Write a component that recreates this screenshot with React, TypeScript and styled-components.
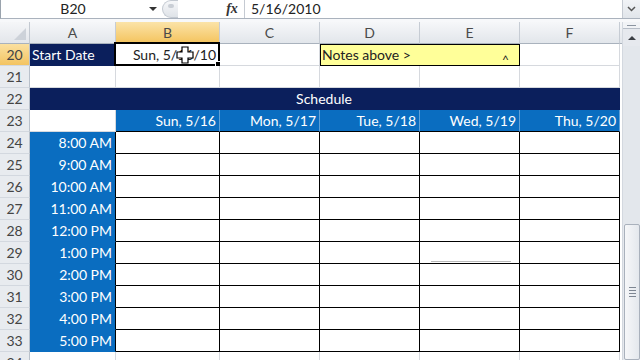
import styled, { createGlobalStyle, css } from "styled-components";

const GlobalStyle = createGlobalStyle`
  html, body {
    margin: 0;
    padding: 0;
    background: #ffffff;
  }
  body {
    font-family: Lato, "Liberation Sans", sans-serif;
  }
`;

const NAVY = "#0b1f5c";
const BLUE = "#0a6dc0";
const GRID = "#d6d9de";

const Window = styled.div`
  width: 640px;
  height: 360px;
  overflow: hidden;
  display: flex;
  flex-direction: column;
  background: #ffffff;
`;

const FormulaBar = styled.div`
  height: 19px;
  box-sizing: border-box;
  display: flex;
  align-items: center;
  border-bottom: 1px solid #aab2bd;
  border-left: 1px solid #9aa3ad;
  font-size: 14px;
  color: #222;
`;

const NameBox = styled.div`
  width: 144px;
  text-align: center;
  line-height: 18px;
`;

const DropArrow = styled.div`
  width: 16px;
  display: flex;
  justify-content: center;

  &::before {
    content: "";
    border-left: 4px solid transparent;
    border-right: 4px solid transparent;
    border-top: 4px solid #333;
  }
`;

const Splitter = styled.div`
  width: 16px;
  height: 18px;
  margin-left: 1px;
  border-radius: 9px 0 0 9px;
  background: linear-gradient(#f6f7f9, #dfe3e8);
  border: 1px solid #c3c9d1;
  border-right: none;
  box-sizing: border-box;
  position: relative;

  &::after {
    content: "";
    position: absolute;
    left: 5px;
    top: 3px;
    width: 6px;
    height: 4px;
    border-radius: 2px;
    background: #c9ced5;
  }
`;

const BarGap = styled.div`
  width: 42px;
  align-self: stretch;
  background: #ffffff;
`;

const FxButton = styled.div`
  width: 24px;
  font-family: "Liberation Serif", serif;
  font-style: italic;
  font-weight: bold;
  font-size: 14px;
  color: #333;
  text-align: center;
  line-height: 18px;
`;

const BarDivider = styled.div`
  width: 1px;
  height: 18px;
  background: #c5cad2;
`;

const FormulaText = styled.div`
  flex: 1;
  padding-left: 6px;
  line-height: 18px;
`;

const ExpandButton = styled.div`
  width: 18px;
  height: 18px;
  box-sizing: border-box;
  border-left: 1px solid #c5cad2;
  background: linear-gradient(#f1f3f6, #e1e5ea);
  display: flex;
  align-items: center;
  justify-content: center;
`;

const BarStrip = styled.div`
  height: 3px;
  background: #f7f8fa;
`;

const SheetArea = styled.div`
  flex: 1;
  display: flex;
  min-height: 0;
`;

const Grid = styled.div`
  width: 623px;
  display: flex;
  flex-direction: column;
`;

const Row = styled.div`
  display: flex;
  height: 22px;
  flex-shrink: 0;
`;

const Corner = styled.div`
  width: 30px;
  box-sizing: border-box;
  background: linear-gradient(#f5f6f8, #e3e6eb);
  border-right: 1px solid #c3c9d1;
  border-bottom: 1px solid #a9b2bd;
  position: relative;

  &::after {
    content: "";
    position: absolute;
    right: 3px;
    bottom: 3px;
    width: 12px;
    height: 12px;
    background: #cdd2d9;
    clip-path: polygon(100% 0, 100% 100%, 0 100%);
  }
`;

const ColHeader = styled.div<{ $w: number; $active?: boolean }>`
  width: ${(p) => p.$w}px;
  box-sizing: border-box;
  text-align: center;
  font-size: 14px;
  line-height: 21px;
  color: #4a4a4a;
  border-right: 1px solid #c6ccd4;
  border-bottom: 1px solid #a9b2bd;
  background: ${(p) =>
    p.$active
      ? "linear-gradient(#fbe3a8, #f4c45e)"
      : "linear-gradient(#f6f7f9, #e2e6eb)"};
`;

const HeaderTail = styled.div`
  flex: 1;
  border-bottom: 1px solid #a9b2bd;
  background: linear-gradient(#f6f7f9, #e2e6eb);
`;

const RowNumber = styled.div<{ $active?: boolean }>`
  width: 30px;
  box-sizing: border-box;
  text-align: center;
  font-size: 14px;
  line-height: 21px;
  color: #444;
  border-right: 1px solid #b9c1cb;
  border-bottom: 1px solid #d3d8df;
  background: ${(p) =>
    p.$active ? "linear-gradient(#fbe0a0, #f3c462)" : "#e8ebef"};
`;

type Variant = "plain" | "navy" | "head" | "time" | "box" | "yellow";

const variants = {
  plain: css`
    background: #fff;
    border-right: 1px solid ${GRID};
    border-bottom: 1px solid ${GRID};
  `,
  navy: css`
    background: ${NAVY};
    color: #fff;
    border-right: 1px solid ${NAVY};
    border-bottom: 1px solid ${NAVY};
  `,
  head: css`
    background: ${BLUE};
    color: #fff;
    border-right: 1px solid #5f9fd6;
    border-bottom: 1px solid #000;
  `,
  time: css`
    background: ${BLUE};
    color: #fff;
    border-right: 1px solid #000;
    border-bottom: 1px solid ${BLUE};
  `,
  box: css`
    background: #fff;
    border-right: 1px solid #000;
    border-bottom: 1px solid #000;
  `,
  yellow: css`
    background: #ffff99;
    color: #222;
    border-right: 1px solid #000;
    border-bottom: 1px solid #000;
    box-shadow: inset 1px 1px 0 #000;
  `,
};

const Cell = styled.div<{ $w: number; $v?: Variant; $align?: "left" | "right" | "center" }>`
  width: ${(p) => p.$w}px;
  box-sizing: border-box;
  position: relative;
  font-size: 14px;
  line-height: 21px;
  color: #222;
  white-space: nowrap;
  text-align: ${(p) => p.$align || "left"};
  padding: 0 3px 0 2px;
  ${(p) => variants[p.$v || "plain"]}
`;

const Tail = styled.div`
  flex: 1;
`;

const Selection = styled.div`
  position: absolute;
  left: -2px;
  top: -2px;
  right: -1px;
  bottom: -1px;
  border: 2px solid #000;
  pointer-events: none;

  &::after {
    content: "";
    position: absolute;
    right: -4px;
    bottom: -4px;
    width: 5px;
    height: 5px;
    background: #000;
    border: 1px solid #fff;
  }
`;

const Cursor = styled.svg`
  position: absolute;
  left: 60px;
  top: 2px;
`;

const Caret = styled.span`
  position: absolute;
  right: 10px;
  top: 10px;
  font-size: 12px;
  line-height: 12px;
`;

const FaintMark = styled.div`
  position: absolute;
  left: 11px;
  right: 8px;
  bottom: 1px;
  height: 1px;
  background: #b9b9b9;
`;

const Scrollbar = styled.div`
  width: 17px;
  display: flex;
  flex-direction: column;
  background: #e6e9ee;
  border-left: 1px solid #d3d8df;
`;

const SplitBox = styled.div`
  height: 6px;
  background: #f1f3f6;
  border-bottom: 1px solid #b7bec8;
  display: flex;
  align-items: center;
  justify-content: center;

  &::before {
    content: "";
    width: 9px;
    height: 1px;
    background: #8c95a1;
  }
`;

const ArrowButton = styled.div`
  height: 17px;
  display: flex;
  align-items: center;
  justify-content: center;

  &::before {
    content: "";
    border-left: 4px solid transparent;
    border-right: 4px solid transparent;
    border-bottom: 4px solid #3b3f45;
  }
`;

const Track = styled.div`
  height: 178px;
  background: #e3e7ec;
`;

const Thumb = styled.div`
  flex: 1;
  margin-left: 1px;
  border: 1px solid #a9b1bc;
  border-radius: 2px;
  background: linear-gradient(90deg, #f6f7f9, #e4e8ed);
  display: flex;
  flex-direction: column;
  align-items: center;
  justify-content: center;
  gap: 2px;
`;

const Grip = styled.div`
  width: 7px;
  height: 1px;
  background: #7d8692;
`;

const COLS = [
  { key: "A", w: 86 },
  { key: "B", w: 104 },
  { key: "C", w: 100 },
  { key: "D", w: 100 },
  { key: "E", w: 100 },
  { key: "F", w: 100 },
];

const DAYS = ["Sun, 5/16", "Mon, 5/17", "Tue, 5/18", "Wed, 5/19", "Thu, 5/20"];
const TIMES = [
  "8:00 AM",
  "9:00 AM",
  "10:00 AM",
  "11:00 AM",
  "12:00 PM",
  "1:00 PM",
  "2:00 PM",
  "3:00 PM",
  "4:00 PM",
  "5:00 PM",
];

function App() {
  return (
    <Window>
      <GlobalStyle />
      <FormulaBar>
        <NameBox>B20</NameBox>
        <DropArrow />
        <Splitter />
        <BarGap />
        <FxButton>fx</FxButton>
        <BarDivider />
        <FormulaText>5/16/2010</FormulaText>
        <ExpandButton>
          <svg width="9" height="6" viewBox="0 0 9 6">
            <path d="M1 1 L4.5 4.5 L8 1" fill="none" stroke="#555" strokeWidth="1.5" />
          </svg>
        </ExpandButton>
      </FormulaBar>
      <BarStrip />

      <SheetArea>
        <Grid>
          <Row>
            <Corner />
            {COLS.map((c) => (
              <ColHeader key={c.key} $w={c.w} $active={c.key === "B"}>
                {c.key}
              </ColHeader>
            ))}
            <HeaderTail />
          </Row>

          <Row>
            <RowNumber $active>20</RowNumber>
            <Cell $w={86} $v="navy">Start Date</Cell>
            <Cell $w={104} $align="right">
              Sun, 5/16/10
              <Selection />
              <Cursor width="18" height="18" viewBox="0 0 18 18">
                <path
                  d="M6 1 H12 V6 H17 V12 H12 V17 H6 V12 H1 V6 H6 Z"
                  fill="#fff"
                  stroke="#000"
                  strokeWidth="1.2"
                />
              </Cursor>
            </Cell>
            <Cell $w={100} />
            <Cell $w={200} $v="yellow">
              Notes above &gt;
              <Caret>^</Caret>
            </Cell>
            <Cell $w={100} />
            <Tail />
          </Row>

          <Row>
            <RowNumber>21</RowNumber>
            {COLS.map((c) => (
              <Cell key={c.key} $w={c.w} />
            ))}
            <Tail />
          </Row>

          <Row>
            <RowNumber>22</RowNumber>
            <Cell $w={590} $v="navy" $align="center">
              Schedule
            </Cell>
            <Tail />
          </Row>

          <Row>
            <RowNumber>23</RowNumber>
            <Cell $w={86} />
            {DAYS.map((d, i) => (
              <Cell key={d} $w={COLS[i + 1].w} $v="head" $align="right">
                {d}
              </Cell>
            ))}
            <Tail />
          </Row>

          {TIMES.map((t, r) => (
            <Row key={t}>
              <RowNumber>{24 + r}</RowNumber>
              <Cell $w={86} $v="time" $align="right">
                {t}
              </Cell>
              {DAYS.map((d, i) => (
                <Cell key={d} $w={COLS[i + 1].w} $v="box">
                  {r === 5 && i === 3 && <FaintMark />}
                </Cell>
              ))}
              <Tail />
            </Row>
          ))}

          <Row>
            <RowNumber>34</RowNumber>
            {COLS.map((c) => (
              <Cell key={c.key} $w={c.w} />
            ))}
            <Tail />
          </Row>
        </Grid>

        <Scrollbar>
          <SplitBox />
          <ArrowButton />
          <Track />
          <Thumb>
            <Grip />
            <Grip />
            <Grip />
            <Grip />
          </Thumb>
        </Scrollbar>
      </SheetArea>
    </Window>
  );
}

export default App;
